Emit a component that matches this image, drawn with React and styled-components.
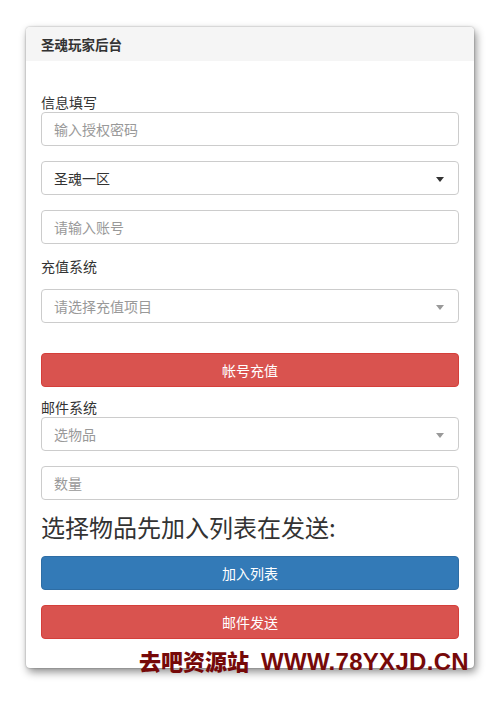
import styled, { createGlobalStyle } from "styled-components";

const GlobalStyle = createGlobalStyle`
  html, body {
    margin: 0;
    padding: 0;
    background: #fff;
  }
  body {
    font-family: "Noto Sans CJK SC", "Liberation Sans", sans-serif;
    font-size: 14px;
    color: #333;
  }
  * { box-sizing: border-box; }
`;

const Page = styled.div`
  position: relative;
  width: 500px;
  height: 702px;
  padding: 27px 26px 0 26px;
`;

const Panel = styled.div`
  width: 448px;
  background: #fff;
  border-radius: 4px;
  box-shadow: 2px 4px 8px rgba(0, 0, 0, 0.45), 0 0 2px rgba(0, 0, 0, 0.35);
  overflow: hidden;
`;

const PanelHeading = styled.div`
  height: 34px;
  background: #f5f5f5;
  padding: 0 15px;
  display: flex;
  align-items: center;
  font-size: 13.5px;
  font-weight: bold;
  color: #333;
`;

const PanelBody = styled.div`
  padding: 31px 15px 29px 15px;
  display: flex;
  flex-direction: column;
`;

const Label = styled.div`
  font-size: 14px;
  line-height: 20px;
  color: #333;
  margin-top: ${(p) => p.mt || "0px"};
  margin-bottom: ${(p) => p.mb || "0px"};
`;

const Field = styled.div`
  position: relative;
  height: 34px;
  border: 1px solid #ccc;
  border-radius: 4px;
  padding: 0 12px;
  display: flex;
  align-items: center;
  font-size: 14px;
  color: ${(p) => (p.placeholder ? "#999" : "#333")};
  margin-top: ${(p) => p.mt || "0px"};
`;

const Caret = styled.span`
  position: absolute;
  right: 14px;
  top: 15px;
  width: 0;
  height: 0;
  border-left: 4px solid transparent;
  border-right: 4px solid transparent;
  border-top: 5px solid ${(p) => (p.muted ? "#999" : "#333")};
`;

const Button = styled.div`
  height: 34px;
  border-radius: 4px;
  display: flex;
  align-items: center;
  justify-content: center;
  color: #fff;
  font-size: 14px;
  background: ${(p) => (p.kind === "primary" ? "#337ab7" : "#d9534f")};
  border: 1px solid ${(p) => (p.kind === "primary" ? "#2e6da4" : "#d43f3a")};
  margin-top: ${(p) => p.mt || "0px"};
`;

const BigTitle = styled.div`
  font-size: 24px;
  line-height: 30px;
  color: #333;
  margin-top: ${(p) => p.mt || "0px"};
`;

const Watermark = styled.div`
  position: absolute;
  left: 139px;
  top: 648px;
  display: flex;
  align-items: baseline;
  gap: 12px;
  color: #760909;
  font-weight: 900;
  white-space: nowrap;
`;

const MarkCn = styled.span`
  font-family: "Noto Sans CJK SC", sans-serif;
  font-size: 22px;
  line-height: 24px;
`;

const MarkUrl = styled.span`
  font-family: "Liberation Sans", sans-serif;
  font-size: 24px;
  line-height: 24px;
  letter-spacing: 0.3px;
`;

export default function App() {
  return (
    <>
      <GlobalStyle />
      <Page>
        <Panel>
          <PanelHeading>圣魂玩家后台</PanelHeading>
          <PanelBody>
            <Label>信息填写</Label>
            <Field placeholder>输入授权密码</Field>
            <Field mt="15px">
              圣魂一区
              <Caret />
            </Field>
            <Field placeholder mt="15px">请输入账号</Field>
            <Label mt="12px" mb="13px">充值系统</Label>
            <Field placeholder>
              请选择充值项目
              <Caret muted />
            </Field>
            <Button mt="30px">帐号充值</Button>
            <Label mt="10px">邮件系统</Label>
            <Field placeholder>
              选物品
              <Caret muted />
            </Field>
            <Field placeholder mt="15px">数量</Field>
            <BigTitle mt="12px">选择物品先加入列表在发送:</BigTitle>
            <Button kind="primary" mt="14px">加入列表</Button>
            <Button mt="15px">邮件发送</Button>
          </PanelBody>
        </Panel>
        <Watermark>
          <MarkCn>去吧资源站</MarkCn>
          <MarkUrl>WWW.78YXJD.CN</MarkUrl>
        </Watermark>
      </Page>
    </>
  );
}
